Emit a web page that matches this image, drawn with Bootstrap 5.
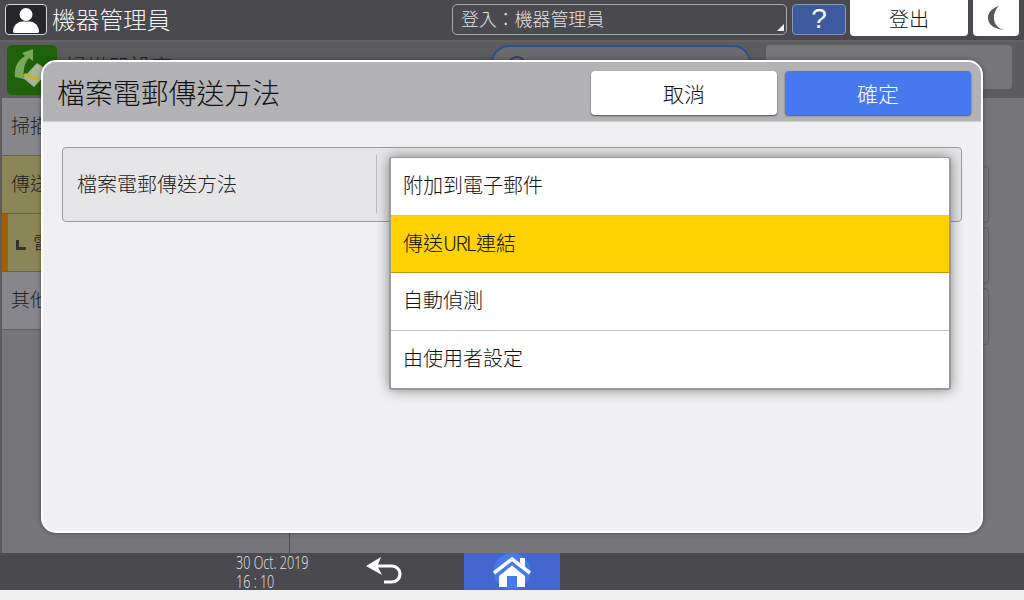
<!DOCTYPE html>
<html lang="zh-Hant">
<head>
<meta charset="utf-8">
<title>檔案電郵傳送方法</title>
<link href="https://cdn.jsdelivr.net/npm/bootstrap@5.3.0/dist/css/bootstrap.min.css" rel="stylesheet">
<style>
html,body{margin:0;height:600px;overflow:hidden;background:#efefef}
body{font-family:"Noto Sans CJK TC","Liberation Sans",sans-serif;font-weight:300;color:#111}
.scr{height:600px;width:1024px;position:relative}
.tbar{height:40px;background:#4a494e;padding:4px 5px 5px 5px;color:#fff}
.ubox{width:42px;height:31px;background:#26262a;border:1px solid #d8d8d8;border-radius:4px}
.utitle{font-size:23.7px;line-height:31px;margin-left:5px;color:#f2f2f2;width:400px}
.login{width:335px;height:31px;border:1px solid #a8a8a8;border-radius:5px;font-size:17.9px;line-height:27px;padding-left:8px;color:#e4e4e4;position:relative}
.login::after{content:"";position:absolute;right:2px;bottom:3px;border-style:solid;border-width:0 0 7px 7px;border-color:transparent transparent #f0f0f0 transparent}
.helpb{width:54px;height:31px;background:#3d5a9f;border:1px solid #8b97b8;border-radius:4px;margin-left:5px;font:400 28px/28px "Liberation Sans",sans-serif;text-align:center;color:#fff}
.outb{width:118px;height:36px;margin:-4px 0 0 4px;background:#fff;border-radius:0 0 4px 4px;color:#111;font-size:20px;line-height:38px;text-align:center}
.moonb{width:46px;height:36px;margin:-4px 0 0 5px;background:#fff;border-radius:0 0 4px 4px}
.dim2{height:58px;background:#5c5c5e;border-top:2px solid #636365;padding:3px 12px 0 7px}
.appic{width:50px;height:50px;background:#1f6108;border-radius:5px}
.aptxt{font-size:21.5px;line-height:28px;margin-left:8px;width:426px;color:#222;padding-top:7px}
.pill{width:260px;height:44px;border:2px solid #2f4f8f;border-bottom:0;border-radius:18px 18px 0 0;background:#6b6b6d;padding:9px 0 0 15px}
.pillic{width:18px;height:18px;border:2px solid #2f3f6f;border-radius:50%}
.greyb{width:246px;height:44px;margin-left:15px;background:#767578;border-radius:4px}
.mainr{height:455px;background:#767579}
.side{width:290px;border-right:1px solid #4f4f52;border-left:2px solid #5d5d60;background:#767579}
.sitem{height:58px;font-size:19px;line-height:54px;padding-left:9px;background:#87868b;border-bottom:1px solid #5e5e60;color:#222}
.sitem.osel{background:#8b8657}
.sitem.osub{background:#8b8657;border-left:6px solid #a35f06;padding-left:8px;display:flex;align-items:center}
.lmark{width:10px;height:10px;border-left:3px solid #333;border-bottom:3px solid #333;margin:4px 7px 0 0}
.rcol{padding:68px 35px 0 0}
.rrow{height:57px;width:100%;border:1px solid #616164;border-radius:4px;background:#767579;margin-bottom:4px}
.bbar{height:37px;background:#4a494e;color:#e8e8e8}
.dt{margin-left:236px;width:110px;font:300 18px/19px "Open Sans","Liberation Sans",sans-serif;color:#e8e8e8;white-space:nowrap;transform:scaleX(.7);transform-origin:left top}
.backb{width:40px;margin-left:18px}
.homeb{width:96px;height:37px;margin-left:60px;background:#4466cf}
.foot{height:10px;background:#efefef}
.dlg{position:absolute;left:41px;top:60px;width:942px;height:473px;background:#f0eff2;border:2px solid #fff;border-radius:15px;overflow:hidden;box-shadow:0 0 5px rgba(0,0,0,.35)}
.dhead{height:60px;background:#b3b3b5;padding:9px 10px 6px 14px;border-bottom:1px solid #cfcfd1}
.dtitle{font-size:27.9px;line-height:42px;color:#111}
.acts{gap:8px}
.abtn{width:186px;height:44px;padding:0;border:0;border-radius:4px;font-size:21px;line-height:40px;font-weight:300;box-shadow:0 1px 2px rgba(0,0,0,.55)}
.acan{background:#fff;color:#111}
.aok{background:#4678f0;color:#fff}
.panel{margin:25px 0 0 19px;width:900px;height:75px;background:#e6e6e8;border:1px solid #9c9c9e;border-radius:4px;position:relative;padding:7px 0 0 14px}
.plabel{width:299px;height:58px;border-right:1px solid #bdbdbf;font-size:20px;line-height:58px;color:#222;box-sizing:content-box}
.drop{position:absolute;left:326px;top:9px;width:562px;background:#fff;border:2px solid #9a9a9a;border-top-width:1px;border-radius:3px;box-shadow:0 0 13px rgba(0,0,0,.45);overflow:hidden}
.ditem{height:57.6px;padding-left:12px;font-size:20px;line-height:53px;color:#111;border-bottom:1px solid #c2c2c2}
.ditem:last-child{border-bottom:0}
.ditem.dsel{background:#ffd200;border-bottom-color:#b89a10}
.ltn{letter-spacing:-1.6px;margin-right:1px}
</style>
</head>
<body>
<div class="scr d-flex flex-column">
  <div class="tbar d-flex">
    <div class="ubox d-flex align-items-center justify-content-center">
      <svg width="32" height="27" viewBox="0 0 32 27"><circle cx="16" cy="8.500" r="6.500" fill="#fff"/><path d="M3 26c0-7 5-10 9-10.500h8c4 .5 9 3.500 9 10.500q0 1-2 1H5q-2 0-2-1z" fill="#fff"/></svg>
    </div>
    <div class="utitle">機器管理員</div>
    <div class="login">登入：機器管理員</div>
    <div class="helpb">?</div>
    <div class="outb">登出</div>
    <div class="moonb d-flex align-items-center justify-content-center">
      <svg width="20" height="26" viewBox="0 0 20 26"><path d="M13 1C6 3 2 7.500 2 13s4 10.500 16 12c-5-1.500-10-5-10-12S11 3 13 1z" fill="#58585a"/></svg>
    </div>
  </div>
  <div class="dim2 d-flex">
    <div class="appic">
      <svg width="50" height="50" viewBox="0 0 50 50"><path d="M8 32C7 22 11 15 18 11l-3-3 11-4v12l-4-3c-5 5-6 13-5 21z" fill="#7aa85a"/><path d="M30 18l12 8-15 16-11-9z" fill="#a8b59a"/><path d="M18 28l15 5-2 3-15-5z" fill="#c2b23a"/></svg>
    </div>
    <div class="aptxt">掃描器設定</div>
    <div class="pill"><div class="pillic"></div></div>
    <div class="greyb"></div>
  </div>
  <div class="mainr d-flex">
    <div class="side">
      <div class="sitem">掃描</div>
      <div class="sitem osel">傳送</div>
      <div class="sitem osub"><span class="lmark"></span><span>電</span></div>
      <div class="sitem">其他</div>
    </div>
    <div class="rcol flex-grow-1">
      <div class="rrow"></div>
      <div class="rrow"></div>
      <div class="rrow"></div>
    </div>
  </div>
  <div class="bbar d-flex">
    <div class="dt">30 Oct. 2019<br>16 : 10</div>
    <div class="backb d-flex align-items-center">
      <svg width="40" height="30" viewBox="0 3 40 30"><path d="M13 12h15a8 8 0 0 1 0 16h-8" fill="none" stroke="#fff" stroke-width="3.200"/><path d="M2 12 17 3 13.500 12 18 21z" fill="#fff"/></svg>
    </div>
    <div class="homeb d-flex align-items-center justify-content-center">
      <svg width="44" height="37" viewBox="0 0 44 37"><circle cx="22" cy="18.500" r="18.500" fill="#4678f0"/><path d="M4 20 22 6l18 14" fill="none" stroke="#fff" stroke-width="3.500"/><path d="M30 5h5v9l-5-4z" fill="#fff"/><path d="M9 23 22 12.500 35 23v11H9z" fill="#fff"/><path d="M17 23h10v11H17z" fill="#4678f0"/></svg>
    </div>
  </div>
  <div class="foot"></div>

  <div class="dlg">
    <div class="dhead d-flex justify-content-between">
      <div class="dtitle">檔案電郵傳送方法</div>
      <div class="acts d-flex">
        <button type="button" class="btn abtn acan">取消</button>
        <button type="button" class="btn abtn aok">確定</button>
      </div>
    </div>
    <div class="panel d-flex">
      <div class="plabel">檔案電郵傳送方法</div>
      <div class="drop">
        <div class="ditem">附加到電子郵件</div>
        <div class="ditem dsel">傳送<span class="ltn">URL</span>連結</div>
        <div class="ditem">自動偵測</div>
        <div class="ditem">由使用者設定</div>
      </div>
    </div>
  </div>
</div>
<script src="https://cdn.jsdelivr.net/npm/bootstrap@5.3.0/dist/js/bootstrap.bundle.min.js"></script>
</body>
</html>
